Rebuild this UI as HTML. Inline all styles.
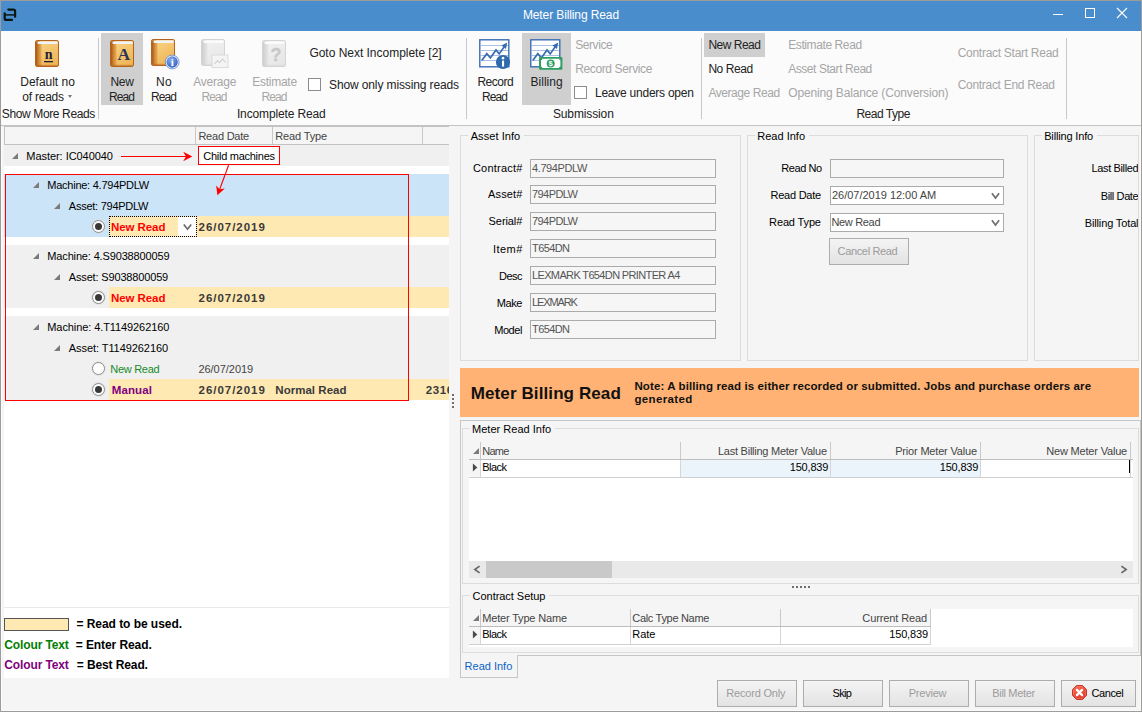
<!DOCTYPE html>
<html lang="en">
<head>
<meta charset="utf-8">
<title>Meter Billing Read</title>
<style>
html,body{margin:0;padding:0}
body{width:1142px;height:712px;position:relative;overflow:hidden;background:#f5f5f5;font-family:"Liberation Sans",sans-serif;font-size:11px;color:#1a1a1a}
.a{position:absolute;white-space:pre}
.bx{position:absolute;box-sizing:border-box}
.hl{background:#cfcfcf}
.sep{width:1px;background:#c8c8c8;top:38px;height:81px}
.chk{width:13px;height:13px;border:1px solid #8c8c8c;background:#fff}
.tri{width:0;height:0;border-left:6px solid transparent;border-bottom:6px solid #7a7a7a}
.radio{width:13px;height:13px;border:1px solid #8d8d8d;border-radius:50%;background:#fff;box-shadow:0 0 0 1px rgba(220,220,220,.6)}
.dot{left:2px;top:2px;width:7px;height:7px;border-radius:50%;background:#383838}
.gb{border:1px solid #dcdcdc}
.cap{background:#f5f5f5;height:12px}
.inp{border:1px solid #ababab;background:#f6f6f6;height:19px}
.inp.w{background:#fff}
.btn{border:1px solid #adadad;background:linear-gradient(#f4f4f4,#e3e3e3);height:27px}
.vl{width:1px;background:#c9c9c9}
.hl1{height:1px;background:#c4c4c4}
</style>
</head>
<body>
<div class="bx" style="left:0;top:0;width:1142px;height:712px;border:1px solid #9d9c9a"></div>
<div class="bx" style="left:1px;top:31px;width:1140px;height:680px;border:1px solid #fbfbfb;border-top:0"></div>
<div class="bx" style="left:1px;top:1px;width:1140px;height:30px;background:#4a8dcc"></div>
<svg class="a" style="left:3px;top:8px" width="15" height="15" viewBox="0 0 15 15"><path d="M5.300 1.600H10.600a1.500 1.500 0 0 1 1.500 1.500V8.700M1.700 5.300V10.400a1.500 1.500 0 0 0 1.500 1.500H9" fill="none" stroke="#0b1610" stroke-width="2.200" stroke-linecap="round" stroke-linejoin="round"/><path d="M1.700 6.900H12.100" fill="none" stroke="#0b1610" stroke-width="1.500"/></svg>
<div class="a" style="left:522.9px;top:7px;font-size:12px;line-height:16px;color:#fff;letter-spacing:-0.11px;">Meter Billing Read</div>
<div class="bx" style="left:1053px;top:14px;width:10px;height:1px;background:#fff"></div>
<div class="bx" style="left:1085px;top:8px;width:10px;height:10px;border:1px solid #fff"></div>
<svg class="a" style="left:1116px;top:7px" width="12" height="12" viewBox="0 0 12 12"><path d="M1 1l10 10M11 1L1 11" stroke="#fff" stroke-width="1.1" fill="none"/></svg>
<div class="bx" style="left:1px;top:31px;width:1140px;height:94px;background:#fbfbfb"></div>
<div class="bx" style="left:1px;top:125px;width:1140px;height:1px;background:#c3c3c3"></div>
<div class="bx sep" style="left:98px"></div>
<div class="bx sep" style="left:466px"></div>
<div class="bx sep" style="left:701px"></div>
<div class="bx sep" style="left:1066px"></div>
<div class="bx hl" style="left:101px;top:33px;width:42px;height:72px"></div>
<div class="bx hl" style="left:522px;top:33px;width:49px;height:72px"></div>
<div class="bx hl" style="left:704px;top:33px;width:61px;height:24px"></div>
<svg class="a" style="left:35px;top:40px" width="24" height="27" viewBox="0 0 24 27"><defs><linearGradient id="b1c" x1="0.2" y1="0" x2="0.8" y2="1"><stop offset="0" stop-color="#f9d584"/><stop offset="1" stop-color="#eeb254"/></linearGradient><linearGradient id="b1s" x1="0" x2="1" y1="0" y2="0"><stop offset="0" stop-color="#a95b1b"/><stop offset="1" stop-color="#e8a548"/></linearGradient></defs><rect x="0.5" y="0.5" width="23" height="26" rx="1.6" ry="1.6" fill="url(#b1c)" stroke="#b4621e"/><path d="M1 2.5a1.5 1.5 0 0 1 1.5-1.5H5.5V26H2.5A1.5 1.5 0 0 1 1 24.5z" fill="url(#b1s)"/><rect x="2.6" y="1.4" width="20" height="2.6" rx=".8" fill="#eef3fa"/><rect x="5.4" y="4" width="0.9" height="22" fill="#b4621e" opacity=".45"/><rect x="1" y="24.8" width="22" height="1.2" fill="#b4621e" opacity=".5"/><text x="13.6" y="19.4" text-anchor="middle" font-family="Liberation Serif, serif" font-weight="bold" font-size="14" fill="#1d2236">n</text><rect x="9" y="21" width="9" height="1.3" fill="#1d2236"/></svg>
<svg class="a" style="left:110px;top:40px" width="24" height="27" viewBox="0 0 24 27"><defs><linearGradient id="b2c" x1="0.2" y1="0" x2="0.8" y2="1"><stop offset="0" stop-color="#f9d584"/><stop offset="1" stop-color="#eeb254"/></linearGradient><linearGradient id="b2s" x1="0" x2="1" y1="0" y2="0"><stop offset="0" stop-color="#a95b1b"/><stop offset="1" stop-color="#e8a548"/></linearGradient></defs><rect x="0.5" y="0.5" width="23" height="26" rx="1.6" ry="1.6" fill="url(#b2c)" stroke="#b4621e"/><path d="M1 2.5a1.5 1.5 0 0 1 1.5-1.5H5.5V26H2.5A1.5 1.5 0 0 1 1 24.5z" fill="url(#b2s)"/><rect x="2.6" y="1.4" width="20" height="2.6" rx=".8" fill="#eef3fa"/><rect x="5.4" y="4" width="0.9" height="22" fill="#b4621e" opacity=".45"/><rect x="1" y="24.8" width="22" height="1.2" fill="#b4621e" opacity=".5"/><text x="13.7" y="20.1" text-anchor="middle" font-family="Liberation Serif, serif" font-weight="bold" font-size="17.5" fill="#2a3558">A</text></svg>
<svg class="a" style="left:151px;top:39px" width="24" height="27" viewBox="0 0 24 27"><defs><linearGradient id="b3c" x1="0.2" y1="0" x2="0.8" y2="1"><stop offset="0" stop-color="#f9d584"/><stop offset="1" stop-color="#eeb254"/></linearGradient><linearGradient id="b3s" x1="0" x2="1" y1="0" y2="0"><stop offset="0" stop-color="#a95b1b"/><stop offset="1" stop-color="#e8a548"/></linearGradient></defs><rect x="0.5" y="0.5" width="23" height="26" rx="1.6" ry="1.6" fill="url(#b3c)" stroke="#b4621e"/><path d="M1 2.5a1.5 1.5 0 0 1 1.5-1.5H5.5V26H2.5A1.5 1.5 0 0 1 1 24.5z" fill="url(#b3s)"/><rect x="2.6" y="1.4" width="20" height="2.6" rx=".8" fill="#eef3fa"/><rect x="5.4" y="4" width="0.9" height="22" fill="#b4621e" opacity=".45"/><rect x="1" y="24.8" width="22" height="1.2" fill="#b4621e" opacity=".5"/></svg>
<svg class="a" style="left:164px;top:54px" width="16" height="16" viewBox="0 0 16 16"><defs><radialGradient id="ib" cx="0.4" cy="0.3" r="0.8"><stop offset="0" stop-color="#86abec"/><stop offset="1" stop-color="#2a5bbf"/></radialGradient></defs><circle cx="8.2" cy="8" r="6.9" fill="#f4f7fd" stroke="#5c7fc4" stroke-width=".8"/><circle cx="8.2" cy="8" r="5.7" fill="url(#ib)"/><text x="8.2" y="11.800" text-anchor="middle" font-family="Liberation Serif, serif" font-weight="bold" font-size="11" fill="#fff">i</text></svg>
<svg class="a" style="left:201px;top:39px" width="24" height="27" viewBox="0 0 24 27"><defs><linearGradient id="b4c" x1="0.2" y1="0" x2="0.8" y2="1"><stop offset="0" stop-color="#f1f1f1"/><stop offset="1" stop-color="#e6e6e6"/></linearGradient><linearGradient id="b4s" x1="0" x2="1" y1="0" y2="0"><stop offset="0" stop-color="#cecece"/><stop offset="1" stop-color="#e2e2e2"/></linearGradient></defs><rect x="0.5" y="0.5" width="23" height="26" rx="1.6" ry="1.6" fill="url(#b4c)" stroke="#d4d4d4"/><path d="M1 2.5a1.5 1.5 0 0 1 1.5-1.5H5.5V26H2.5A1.5 1.5 0 0 1 1 24.5z" fill="url(#b4s)"/><rect x="2.6" y="1.4" width="20" height="2.6" rx=".8" fill="#fbfbfb"/><rect x="5.4" y="4" width="0.9" height="22" fill="#d4d4d4" opacity=".45"/><rect x="1" y="24.8" width="22" height="1.2" fill="#d4d4d4" opacity=".5"/></svg>
<svg class="a" style="left:211px;top:54px" width="18" height="15" viewBox="0 0 18 15"><rect x="1" y="1" width="16" height="12.6" fill="#f4f4f4" stroke="#dadada"/><path d="M3.5 10l3-3.4 2.2 2 2.8-3.6 3 3.4" fill="none" stroke="#cfcfcf" stroke-width="1.1"/></svg>
<svg class="a" style="left:262px;top:40px" width="24" height="27" viewBox="0 0 24 27"><defs><linearGradient id="b5c" x1="0.2" y1="0" x2="0.8" y2="1"><stop offset="0" stop-color="#f1f1f1"/><stop offset="1" stop-color="#e6e6e6"/></linearGradient><linearGradient id="b5s" x1="0" x2="1" y1="0" y2="0"><stop offset="0" stop-color="#cecece"/><stop offset="1" stop-color="#e2e2e2"/></linearGradient></defs><rect x="0.5" y="0.5" width="23" height="26" rx="1.6" ry="1.6" fill="url(#b5c)" stroke="#d4d4d4"/><path d="M1 2.5a1.5 1.5 0 0 1 1.5-1.5H5.5V26H2.5A1.5 1.5 0 0 1 1 24.5z" fill="url(#b5s)"/><rect x="2.6" y="1.4" width="20" height="2.6" rx=".8" fill="#fbfbfb"/><rect x="5.4" y="4" width="0.9" height="22" fill="#d4d4d4" opacity=".45"/><rect x="1" y="24.8" width="22" height="1.2" fill="#d4d4d4" opacity=".5"/><text x="14" y="20.5" text-anchor="middle" font-family="Liberation Sans, sans-serif" font-weight="bold" font-size="18" fill="#c8c8c8" stroke="#c8c8c8" stroke-width=".3">?</text></svg>
<div class="a" style="left:20.3px;top:75px;font-size:12px;line-height:15px;color:#222;letter-spacing:-0.02px;">Default no</div>
<div class="a" style="left:22.3px;top:90px;font-size:12px;line-height:15px;color:#222;letter-spacing:-0.23px;">of reads</div>
<div class="bx" style="left:68px;top:95px;width:0;height:0;border-left:2.5px solid transparent;border-right:2.5px solid transparent;border-top:3px solid #777"></div>
<div class="a" style="left:1.8px;top:107px;font-size:12px;line-height:15px;color:#222;letter-spacing:-0.37px;">Show More Reads</div>
<div class="a" style="left:110.4px;top:75px;font-size:12px;line-height:15px;color:#222;letter-spacing:-0.24px;">New</div>
<div class="a" style="left:109.0px;top:90px;font-size:12px;line-height:15px;color:#222;letter-spacing:-0.92px;">Read</div>
<div class="a" style="left:156.1px;top:75px;font-size:12px;line-height:15px;color:#222;letter-spacing:0.13px;">No</div>
<div class="a" style="left:151.0px;top:90px;font-size:12px;line-height:15px;color:#222;letter-spacing:-0.92px;">Read</div>
<div class="a" style="left:193.3px;top:75px;font-size:12px;line-height:15px;color:#a6a6a6;letter-spacing:-0.24px;">Average</div>
<div class="a" style="left:201.5px;top:90px;font-size:12px;line-height:15px;color:#a6a6a6;letter-spacing:-0.92px;">Read</div>
<div class="a" style="left:252.2px;top:75px;font-size:12px;line-height:15px;color:#a6a6a6;letter-spacing:-0.26px;">Estimate</div>
<div class="a" style="left:261.5px;top:90px;font-size:12px;line-height:15px;color:#a6a6a6;letter-spacing:-0.92px;">Read</div>
<div class="a" style="left:309.4px;top:46px;font-size:12px;line-height:15px;color:#222;letter-spacing:-0.02px;">Goto Next Incomplete [2]</div>
<div class="bx chk" style="left:308px;top:78px"></div>
<div class="a" style="left:329.0px;top:78px;font-size:12px;line-height:15px;color:#222;letter-spacing:-0.12px;">Show only missing reads</div>
<div class="a" style="left:236.9px;top:107px;font-size:12px;line-height:15px;color:#222;letter-spacing:-0.13px;">Incomplete Read</div>
<svg class="a" style="left:478.6px;top:38.6px" width="31" height="29" viewBox="0 0 31 29"><rect x="0.8" y="0.8" width="29" height="27" fill="#fff" stroke="#3a6cb2" stroke-width="1.4"/><path d="M2 6.5H29" stroke="#a9c1e4" stroke-width="1"/><path d="M2 11.5H29" stroke="#a9c1e4" stroke-width="1"/><path d="M2 16.5H29" stroke="#a9c1e4" stroke-width="1"/><path d="M2 21.5H29" stroke="#a9c1e4" stroke-width="1"/><path d="M2.8 21.5l5-6.8 3.6 4.2 5.6-8 3.2 4 5.4-7.6" fill="none" stroke="#3a6cb2" stroke-width="1.7" stroke-linejoin="miter"/><path d="M28.2 3.6l-1.2 6.4-4.6-3.6z" fill="#3a6cb2"/></svg>
<svg class="a" style="left:495px;top:54px" width="16" height="16" viewBox="0 0 16 16"><circle cx="8" cy="8" r="7.1" fill="#2f69ae"/><rect x="7" y="6.6" width="2.1" height="6" fill="#fff"/><circle cx="8" cy="4.2" r="1.35" fill="#fff"/></svg>
<svg class="a" style="left:529.6px;top:38.6px" width="31" height="29" viewBox="0 0 31 29"><rect x="0.8" y="0.8" width="29" height="27" fill="#fff" stroke="#3a6cb2" stroke-width="1.4"/><path d="M2 6.5H29" stroke="#a9c1e4" stroke-width="1"/><path d="M2 11.5H29" stroke="#a9c1e4" stroke-width="1"/><path d="M2 16.5H29" stroke="#a9c1e4" stroke-width="1"/><path d="M2 21.5H29" stroke="#a9c1e4" stroke-width="1"/><path d="M2.8 21.5l5-6.8 3.6 4.2 5.6-8 3.2 4 5.4-7.6" fill="none" stroke="#3a6cb2" stroke-width="1.7" stroke-linejoin="miter"/><path d="M28.2 3.6l-1.2 6.4-4.6-3.6z" fill="#3a6cb2"/></svg>
<svg class="a" style="left:539px;top:57px" width="24" height="13" viewBox="0 0 24 13"><rect x="0" y="0" width="23.4" height="12.8" rx="1" fill="#2f9e63"/><path d="M2 3.2a1.6 1.6 0 0 0 1.4-1.4H20a1.6 1.6 0 0 0 1.4 1.4v6.4A1.6 1.6 0 0 0 20 11H3.4A1.6 1.6 0 0 0 2 9.6z" fill="#fff"/><circle cx="11.7" cy="6.4" r="4" fill="#2f9e63"/><text x="11.7" y="9.2" text-anchor="middle" font-family="Liberation Sans, sans-serif" font-weight="bold" font-size="7.5" fill="#fff">$</text></svg>
<div class="a" style="left:477.4px;top:75px;font-size:12px;line-height:15px;color:#222;letter-spacing:-0.5px;">Record</div>
<div class="a" style="left:482.0px;top:90px;font-size:12px;line-height:15px;color:#222;letter-spacing:-0.92px;">Read</div>
<div class="a" style="left:530.6px;top:75px;font-size:12px;line-height:15px;color:#222;">Billing</div>
<div class="a" style="left:575.2px;top:38px;font-size:12px;line-height:15px;color:#a6a6a6;letter-spacing:-0.43px;">Service</div>
<div class="a" style="left:575.2px;top:62px;font-size:12px;line-height:15px;color:#a6a6a6;letter-spacing:-0.37px;">Record Service</div>
<div class="bx chk" style="left:574px;top:86px"></div>
<div class="a" style="left:595.0px;top:86px;font-size:12px;line-height:15px;color:#222;letter-spacing:-0.24px;">Leave unders open</div>
<div class="a" style="left:552.9px;top:107px;font-size:12px;line-height:15px;color:#222;letter-spacing:-0.12px;">Submission</div>
<div class="a" style="left:708.4px;top:38px;font-size:12px;line-height:15px;color:#222;letter-spacing:-0.5px;">New Read</div>
<div class="a" style="left:708.4px;top:62px;font-size:12px;line-height:15px;color:#222;letter-spacing:-0.44px;">No Read</div>
<div class="a" style="left:708.4px;top:86px;font-size:12px;line-height:15px;color:#a6a6a6;letter-spacing:-0.44px;">Average Read</div>
<div class="a" style="left:788.2px;top:38px;font-size:12px;line-height:15px;color:#a6a6a6;letter-spacing:-0.4px;">Estimate Read</div>
<div class="a" style="left:788.2px;top:62px;font-size:12px;line-height:15px;color:#a6a6a6;letter-spacing:-0.44px;">Asset Start Read</div>
<div class="a" style="left:788.2px;top:86px;font-size:12px;line-height:15px;color:#a6a6a6;letter-spacing:-0.14px;">Opening Balance (Conversion)</div>
<div class="a" style="left:957.7px;top:46px;font-size:12px;line-height:15px;color:#a6a6a6;letter-spacing:-0.28px;">Contract Start Read</div>
<div class="a" style="left:957.7px;top:78px;font-size:12px;line-height:15px;color:#a6a6a6;letter-spacing:-0.3px;">Contract End Read</div>
<div class="a" style="left:856.4px;top:107px;font-size:12px;line-height:15px;color:#222;letter-spacing:-0.48px;">Read Type</div>
<div class="bx" style="left:4px;top:126px;width:445px;height:552px;background:#fff"></div>
<div class="bx" style="left:4px;top:126px;width:445px;height:19px;background:#f5f5f5;border:1px solid #c2c2c2;border-right:0"></div>
<div class="bx vl" style="left:195px;top:127px;height:17px"></div>
<div class="bx vl" style="left:272px;top:127px;height:17px"></div>
<div class="bx vl" style="left:422px;top:127px;height:17px"></div>
<div class="a" style="left:198.4px;top:129px;font-size:11px;line-height:14px;color:#444;letter-spacing:-0.22px;">Read Date</div>
<div class="a" style="left:275.3px;top:129px;font-size:11px;line-height:14px;color:#444;letter-spacing:-0.15px;">Read Type</div>
<div class="bx" style="left:4px;top:145px;width:445px;height:21px;background:#f0f0f0"></div>
<div class="bx" style="left:4px;top:174px;width:445px;height:63px;background:#cce4f7"></div>
<div class="bx" style="left:109px;top:216px;width:340px;height:21px;background:#ffe9b3"></div>
<div class="bx" style="left:4px;top:245px;width:445px;height:63px;background:#f0f0f0"></div>
<div class="bx" style="left:109px;top:287px;width:340px;height:21px;background:#ffe9b3"></div>
<div class="bx" style="left:4px;top:316px;width:445px;height:84px;background:#f0f0f0"></div>
<div class="bx" style="left:109px;top:379px;width:340px;height:21px;background:#ffe9b3"></div>
<div class="bx tri" style="left:12px;top:153px"></div>
<div class="a" style="left:26.3px;top:149px;font-size:11px;line-height:14px;color:#000;letter-spacing:-0.05px;">Master: IC040040</div>
<div class="bx tri" style="left:33px;top:182px"></div>
<div class="a" style="left:47.3px;top:178px;font-size:11px;line-height:14px;color:#000;letter-spacing:-0.25px;">Machine: 4.794PDLW</div>
<div class="bx tri" style="left:54px;top:203px"></div>
<div class="a" style="left:68.8px;top:199px;font-size:11px;line-height:14px;color:#000;letter-spacing:-0.25px;">Asset: 794PDLW</div>
<div class="bx tri" style="left:33px;top:253px"></div>
<div class="a" style="left:47.3px;top:249px;font-size:11px;line-height:14px;color:#000;letter-spacing:-0.15px;">Machine: 4.S9038800059</div>
<div class="bx tri" style="left:54px;top:274px"></div>
<div class="a" style="left:68.8px;top:270px;font-size:11px;line-height:14px;color:#000;letter-spacing:-0.16px;">Asset: S9038800059</div>
<div class="bx tri" style="left:33px;top:324px"></div>
<div class="a" style="left:47.3px;top:320px;font-size:11px;line-height:14px;color:#000;letter-spacing:-0.09px;">Machine: 4.T1149262160</div>
<div class="bx tri" style="left:54px;top:345px"></div>
<div class="a" style="left:68.8px;top:341px;font-size:11px;line-height:14px;color:#000;letter-spacing:-0.07px;">Asset: T1149262160</div>
<div class="bx radio" style="left:92px;top:220px"><div class="bx dot"></div></div>
<div class="bx" style="left:109px;top:216px;width:88px;height:21px;border:1px dotted #000"></div>
<div class="bx" style="left:178px;top:217px;width:18px;height:19px;background:#fff"></div>
<svg class="a" style="left:183px;top:223px" width="9" height="8" viewBox="0 0 9 8"><path d="M0.8 1.4L4.5 6.2 8.2 1.4" fill="none" stroke="#6a6a6a" stroke-width="1.7"/></svg>
<div class="a" style="left:111.0px;top:220px;font-size:11.5px;line-height:14.5px;color:#f00;font-weight:bold;letter-spacing:-0.08px;">New Read</div>
<div class="a" style="left:198.6px;top:220px;font-size:11.5px;line-height:14.5px;color:#3a3a3a;font-weight:bold;letter-spacing:0.96px;">26/07/2019</div>
<div class="bx radio" style="left:92px;top:291px"><div class="bx dot"></div></div>
<div class="a" style="left:111.0px;top:291px;font-size:11.5px;line-height:14.5px;color:#f00;font-weight:bold;letter-spacing:-0.08px;">New Read</div>
<div class="a" style="left:198.6px;top:291px;font-size:11.5px;line-height:14.5px;color:#3a3a3a;font-weight:bold;letter-spacing:0.96px;">26/07/2019</div>
<div class="bx radio" style="left:92px;top:362px"></div>
<div class="a" style="left:110.3px;top:362px;font-size:11px;line-height:14px;color:#178a2a;letter-spacing:-0.29px;">New Read</div>
<div class="a" style="left:198.4px;top:362px;font-size:11px;line-height:14px;color:#444;letter-spacing:-0.03px;">26/07/2019</div>
<div class="bx radio" style="left:92px;top:383px"><div class="bx dot"></div></div>
<div class="a" style="left:111.7px;top:383px;font-size:11.5px;line-height:14.5px;color:#800080;font-weight:bold;letter-spacing:0.11px;">Manual</div>
<div class="a" style="left:198.6px;top:383px;font-size:11.5px;line-height:14.5px;color:#3a3a3a;font-weight:bold;letter-spacing:0.96px;">26/07/2019</div>
<div class="a" style="left:275.3px;top:383px;font-size:11.5px;line-height:14.5px;color:#3a3a3a;font-weight:bold;letter-spacing:0.03px;">Normal Read</div>
<div class="bx" style="left:422px;top:380px;width:27px;height:20px;overflow:hidden">
<div class="a" style="left:3.7px;top:3px;font-size:11.5px;line-height:14.5px;color:#3a3a3a;font-weight:bold;letter-spacing:0.6px;">231600</div>
</div>
<div class="bx" style="left:5px;top:174px;width:404px;height:227px;border:1px solid #f00"></div>
<div class="bx" style="left:198px;top:146px;width:82px;height:19px;border:1px solid #f00;background:#fff"></div>
<div class="a" style="left:203.3px;top:149px;font-size:11px;line-height:14px;color:#000;letter-spacing:-0.27px;">Child machines</div>
<svg class="a" style="left:110px;top:140px" width="130" height="60" viewBox="110 140 130 60"><path d="M121 156.5H187" stroke="#f00" stroke-width="1.1" fill="none"/><path d="M192.3 156.5L183.2 151.8 186 156.5 183.2 161.2z" fill="#f00"/><path d="M228.6 165.2L219.6 189.5" stroke="#f00" stroke-width="1.1" fill="none"/><path d="M217.4 195.3L216.2 185.6 219.6 189.2 224.8 188.5z" fill="#f00"/></svg>
<div class="bx" style="left:4px;top:607px;width:445px;height:1px;background:#e9e9e9"></div>
<div class="bx" style="left:4px;top:618px;width:65px;height:13px;background:#ffe9b3;border:1px solid #555"></div>
<div class="a" style="left:76.5px;top:617px;font-size:12px;line-height:15px;color:#000;font-weight:bold;letter-spacing:-0.05px;">= Read to be used.</div>
<div class="a" style="left:4.2px;top:638px;font-size:12px;line-height:15px;color:#008000;font-weight:bold;letter-spacing:-0.11px;">Colour Text</div>
<div class="a" style="left:75.8px;top:638px;font-size:12px;line-height:15px;color:#000;font-weight:bold;letter-spacing:-0.09px;">= Enter Read.</div>
<div class="a" style="left:4.2px;top:658px;font-size:12px;line-height:15px;color:#800080;font-weight:bold;letter-spacing:-0.11px;">Colour Text</div>
<div class="a" style="left:76.8px;top:658px;font-size:12px;line-height:15px;color:#000;font-weight:bold;letter-spacing:-0.11px;">= Best Read.</div>
<div class="bx" style="left:452px;top:394px;width:2px;height:2px;background:#6e6e6e"></div>
<div class="bx" style="left:452px;top:398px;width:2px;height:2px;background:#6e6e6e"></div>
<div class="bx" style="left:452px;top:402px;width:2px;height:2px;background:#6e6e6e"></div>
<div class="bx" style="left:452px;top:406px;width:2px;height:2px;background:#6e6e6e"></div>
<div class="bx gb" style="left:460px;top:135px;width:281px;height:226px;"></div>
<div class="bx cap" style="left:468px;top:130px;width:56px"></div>
<div class="a" style="left:470.7px;top:129px;font-size:11px;line-height:14px;color:#000;letter-spacing:0.07px;">Asset Info</div>
<div class="bx gb" style="left:747px;top:135px;width:281px;height:226px;"></div>
<div class="bx cap" style="left:755px;top:130px;width:54px"></div>
<div class="a" style="left:757.3px;top:129px;font-size:11px;line-height:14px;color:#000;">Read Info</div>
<div class="bx gb" style="left:1034px;top:135px;width:105px;height:226px;"></div>
<div class="bx cap" style="left:1042px;top:130px;width:55px"></div>
<div class="a" style="left:1044.2px;top:129px;font-size:11px;line-height:14px;color:#000;letter-spacing:-0.16px;">Billing Info</div>
<div class="bx inp" style="left:530px;top:159px;width:186px"></div>
<div class="a" style="left:472.9px;top:161px;font-size:11px;line-height:14px;color:#000;letter-spacing:0.23px;">Contract#</div>
<div class="a" style="left:532.0px;top:161px;font-size:11px;line-height:14px;color:#555;letter-spacing:-0.39px;">4.794PDLW</div>
<div class="bx inp" style="left:530px;top:185px;width:186px"></div>
<div class="a" style="left:488.1px;top:187px;font-size:11px;line-height:14px;color:#000;letter-spacing:0.13px;">Asset#</div>
<div class="a" style="left:532.0px;top:187px;font-size:11px;line-height:14px;color:#555;letter-spacing:-0.56px;">794PDLW</div>
<div class="bx inp" style="left:530px;top:212px;width:186px"></div>
<div class="a" style="left:488.6px;top:214px;font-size:11px;line-height:14px;color:#000;letter-spacing:-0.08px;">Serial#</div>
<div class="a" style="left:532.0px;top:214px;font-size:11px;line-height:14px;color:#555;letter-spacing:-0.56px;">794PDLW</div>
<div class="bx inp" style="left:530px;top:239px;width:186px"></div>
<div class="a" style="left:493.0px;top:242px;font-size:11px;line-height:14px;color:#000;letter-spacing:0.46px;">Item#</div>
<div class="a" style="left:532.0px;top:241px;font-size:11px;line-height:14px;color:#555;letter-spacing:-0.58px;">T654DN</div>
<div class="bx inp" style="left:530px;top:266px;width:186px"></div>
<div class="a" style="left:499.1px;top:269px;font-size:11px;line-height:14px;color:#000;letter-spacing:-0.59px;">Desc</div>
<div class="a" style="left:532.0px;top:268px;font-size:11px;line-height:14px;color:#555;letter-spacing:-0.64px;">LEXMARK T654DN PRINTER A4</div>
<div class="bx inp" style="left:530px;top:293px;width:186px"></div>
<div class="a" style="left:496.7px;top:296px;font-size:11px;line-height:14px;color:#000;letter-spacing:-0.4px;">Make</div>
<div class="a" style="left:532.0px;top:295px;font-size:11px;line-height:14px;color:#555;letter-spacing:-1.13px;">LEXMARK</div>
<div class="bx inp" style="left:530px;top:320px;width:186px"></div>
<div class="a" style="left:494.2px;top:323px;font-size:11px;line-height:14px;color:#000;letter-spacing:-0.45px;">Model</div>
<div class="a" style="left:532.0px;top:322px;font-size:11px;line-height:14px;color:#555;letter-spacing:-0.58px;">T654DN</div>
<div class="bx inp" style="left:830px;top:159px;width:174px"></div>
<div class="bx inp w" style="left:830px;top:186px;width:174px"></div>
<div class="bx inp w" style="left:830px;top:213px;width:174px"></div>
<svg class="a" style="left:991px;top:192px" width="9" height="8" viewBox="0 0 9 8"><path d="M0.9 1.3L4.5 6 8.1 1.3" fill="none" stroke="#707070" stroke-width="1.7"/></svg>
<svg class="a" style="left:991px;top:219px" width="9" height="8" viewBox="0 0 9 8"><path d="M0.9 1.3L4.5 6 8.1 1.3" fill="none" stroke="#707070" stroke-width="1.7"/></svg>
<div class="a" style="left:781.3px;top:161px;font-size:11px;line-height:14px;color:#000;letter-spacing:-0.42px;">Read No</div>
<div class="a" style="left:770.5px;top:188px;font-size:11px;line-height:14px;color:#000;letter-spacing:-0.24px;">Read Date</div>
<div class="a" style="left:769.1px;top:215px;font-size:11px;line-height:14px;color:#000;letter-spacing:-0.14px;">Read Type</div>
<div class="a" style="left:832.0px;top:188px;font-size:11px;line-height:14px;color:#444;letter-spacing:-0.02px;">26/07/2019 12:00 AM</div>
<div class="a" style="left:831.4px;top:215px;font-size:11px;line-height:14px;color:#444;letter-spacing:-0.32px;">New Read</div>
<div class="bx btn" style="left:829px;top:238px;width:80px"></div>
<div class="a" style="left:837.6px;top:244px;font-size:11px;line-height:14px;color:#9a9a9a;letter-spacing:-0.35px;">Cancel Read</div>
<div class="bx" style="left:1040px;top:150px;width:98px;height:90px;overflow:hidden">
<div class="a" style="left:51.6px;top:11px;font-size:11px;line-height:14px;color:#000;letter-spacing:-0.38px;">Last Billed</div>
<div class="a" style="left:60.8px;top:39px;font-size:11px;line-height:14px;color:#000;letter-spacing:-0.39px;">Bill Date</div>
<div class="a" style="left:44.7px;top:66px;font-size:11px;line-height:14px;color:#000;letter-spacing:-0.13px;">Billing Total</div>
</div>
<div class="bx" style="left:460px;top:368px;width:679px;height:49px;background:#ffb273"></div>
<div class="a" style="left:470.8px;top:383px;font-size:17px;line-height:21px;color:#111;font-weight:bold;letter-spacing:0.1px;">Meter Billing Read</div>
<div class="a" style="left:634.4px;top:379px;font-size:11.5px;line-height:14.5px;color:#111;font-weight:bold;letter-spacing:0.11px;">Note: A billing read is either recorded or submitted. Jobs and purchase orders are</div>
<div class="a" style="left:634.4px;top:392px;font-size:11.5px;line-height:14.5px;color:#111;font-weight:bold;letter-spacing:0.35px;">generated</div>
<div class="bx" style="left:460px;top:420px;width:681px;height:236px;border:1px solid #c6c6c6;border-bottom:0"></div>
<div class="bx" style="left:517px;top:655px;width:624px;height:1px;background:#c6c6c6"></div>
<div class="bx" style="left:460px;top:655px;width:58px;height:23px;border:1px solid #c6c6c6;border-top:0"></div>
<div class="a" style="left:464.6px;top:659px;font-size:11px;line-height:14px;color:#0b63c5;">Read Info</div>
<div class="bx gb" style="left:462px;top:428px;width:677px;height:156px;"></div>
<div class="bx cap" style="left:470px;top:423px;width:85px"></div>
<div class="a" style="left:472.0px;top:422px;font-size:11px;line-height:14px;color:#000;letter-spacing:0.02px;">Meter Read Info</div>
<div class="bx" style="left:469px;top:460px;width:664px;height:101px;background:#fff"></div>
<div class="bx" style="left:469px;top:460px;width:11px;height:17px;background:#f5f5f5"></div>
<div class="bx" style="left:681px;top:460px;width:299px;height:17px;background:#ebf4fa"></div>
<div class="bx vl" style="left:480px;top:442px;height:17px"></div>
<div class="bx vl" style="left:480px;top:460px;height:17px;background:#d6d6d6"></div>
<div class="bx vl" style="left:680px;top:442px;height:17px"></div>
<div class="bx vl" style="left:680px;top:460px;height:17px;background:#d6d6d6"></div>
<div class="bx vl" style="left:830px;top:442px;height:17px"></div>
<div class="bx vl" style="left:830px;top:460px;height:17px;background:#d6d6d6"></div>
<div class="bx vl" style="left:980px;top:442px;height:17px"></div>
<div class="bx vl" style="left:980px;top:460px;height:17px;background:#d6d6d6"></div>
<div class="bx vl" style="left:1130px;top:442px;height:17px"></div>
<div class="bx vl" style="left:1130px;top:460px;height:17px;background:#d6d6d6"></div>
<div class="bx hl1" style="left:469px;top:459px;width:664px;background:#bdbdbd"></div>
<div class="bx hl1" style="left:469px;top:477px;width:664px;background:#d0d0d0"></div>
<div class="bx tri" style="left:473px;top:448px"></div>
<svg class="a" style="left:472px;top:463px" width="6" height="9" viewBox="0 0 6 9"><path d="M0.900 0.600L5.300 4.500 0.900 8.400z" fill="#4a4a4a"/></svg>
<div class="a" style="left:482.2px;top:444px;font-size:11px;line-height:14px;color:#444;letter-spacing:-0.71px;">Name</div>
<div class="a" style="left:718.0px;top:444px;font-size:11px;line-height:14px;color:#444;letter-spacing:-0.25px;">Last Billing Meter Value</div>
<div class="a" style="left:895.2px;top:444px;font-size:11px;line-height:14px;color:#444;letter-spacing:-0.18px;">Prior Meter Value</div>
<div class="a" style="left:1046.3px;top:444px;font-size:11px;line-height:14px;color:#444;letter-spacing:-0.19px;">New Meter Value</div>
<div class="a" style="left:482.2px;top:460px;font-size:11px;line-height:14px;color:#000;letter-spacing:-0.54px;">Black</div>
<div class="a" style="left:789.7px;top:460px;font-size:11px;line-height:14px;color:#000;letter-spacing:-0.17px;">150,839</div>
<div class="a" style="left:939.7px;top:460px;font-size:11px;line-height:14px;color:#000;letter-spacing:-0.17px;">150,839</div>
<div class="bx" style="left:1129px;top:460px;width:1px;height:13px;background:#000"></div>
<div class="bx" style="left:469px;top:561px;width:664px;height:17px;background:#e9e9e9"></div>
<div class="bx" style="left:486px;top:561px;width:126px;height:17px;background:#c9c9c9"></div>
<svg class="a" style="left:473px;top:565px" width="8" height="9" viewBox="0 0 8 9"><path d="M6.6 1.200L1.800 4.500 6.600 7.800" fill="none" stroke="#666" stroke-width="1.600"/></svg>
<svg class="a" style="left:1120px;top:565px" width="8" height="9" viewBox="0 0 8 9"><path d="M1.400 1.200L6.200 4.500 1.400 7.800" fill="none" stroke="#666" stroke-width="1.600"/></svg>
<div class="bx" style="left:792px;top:586px;width:2px;height:2px;background:#6e6e6e"></div>
<div class="bx" style="left:796px;top:586px;width:2px;height:2px;background:#6e6e6e"></div>
<div class="bx" style="left:800px;top:586px;width:2px;height:2px;background:#6e6e6e"></div>
<div class="bx" style="left:804px;top:586px;width:2px;height:2px;background:#6e6e6e"></div>
<div class="bx" style="left:808px;top:586px;width:2px;height:2px;background:#6e6e6e"></div>
<div class="bx gb" style="left:462px;top:595px;width:677px;height:58px;"></div>
<div class="bx cap" style="left:470px;top:590px;width:79px"></div>
<div class="a" style="left:472.6px;top:589px;font-size:11px;line-height:14px;color:#000;letter-spacing:-0.04px;">Contract Setup</div>
<div class="bx" style="left:469px;top:609px;width:664px;height:38px;background:#fff"></div>
<div class="bx" style="left:469px;top:609px;width:462px;height:17px;background:#f5f5f5"></div>
<div class="bx" style="left:469px;top:627px;width:11px;height:17px;background:#f5f5f5"></div>
<div class="bx vl" style="left:480px;top:609px;height:17px"></div>
<div class="bx vl" style="left:480px;top:627px;height:17px;background:#d6d6d6"></div>
<div class="bx vl" style="left:630px;top:609px;height:17px"></div>
<div class="bx vl" style="left:630px;top:627px;height:17px;background:#d6d6d6"></div>
<div class="bx vl" style="left:780px;top:609px;height:17px"></div>
<div class="bx vl" style="left:780px;top:627px;height:17px;background:#d6d6d6"></div>
<div class="bx vl" style="left:930px;top:609px;height:17px"></div>
<div class="bx vl" style="left:930px;top:627px;height:17px;background:#d6d6d6"></div>
<div class="bx hl1" style="left:469px;top:626px;width:462px;background:#bdbdbd"></div>
<div class="bx hl1" style="left:469px;top:644px;width:462px;background:#d0d0d0"></div>
<div class="bx tri" style="left:473px;top:615px"></div>
<svg class="a" style="left:472px;top:630px" width="6" height="9" viewBox="0 0 6 9"><path d="M0.900 0.600L5.300 4.500 0.900 8.400z" fill="#4a4a4a"/></svg>
<div class="a" style="left:482.2px;top:611px;font-size:11px;line-height:14px;color:#444;letter-spacing:-0.17px;">Meter Type Name</div>
<div class="a" style="left:632.3px;top:611px;font-size:11px;line-height:14px;color:#444;letter-spacing:-0.31px;">Calc Type Name</div>
<div class="a" style="left:862.3px;top:611px;font-size:11px;line-height:14px;color:#444;letter-spacing:-0.1px;">Current Read</div>
<div class="a" style="left:482.2px;top:627px;font-size:11px;line-height:14px;color:#000;letter-spacing:-0.54px;">Black</div>
<div class="a" style="left:632.3px;top:627px;font-size:11px;line-height:14px;color:#000;letter-spacing:-0.06px;">Rate</div>
<div class="a" style="left:889.2px;top:627px;font-size:11px;line-height:14px;color:#000;letter-spacing:-0.14px;">150,839</div>
<div class="bx btn" style="left:717px;top:680px;width:80px"></div>
<div class="bx btn" style="left:803px;top:680px;width:80px"></div>
<div class="bx btn" style="left:889px;top:680px;width:80px"></div>
<div class="bx btn" style="left:975px;top:680px;width:80px"></div>
<div class="bx btn" style="left:1061px;top:680px;width:75px"></div>
<div class="a" style="left:726.3px;top:686px;font-size:11px;line-height:14px;color:#9c9c9c;letter-spacing:-0.19px;">Record Only</div>
<div class="a" style="left:832.6px;top:686px;font-size:11px;line-height:14px;color:#000;letter-spacing:-0.73px;">Skip</div>
<div class="a" style="left:908.7px;top:686px;font-size:11px;line-height:14px;color:#9c9c9c;letter-spacing:-0.22px;">Preview</div>
<div class="a" style="left:992.3px;top:686px;font-size:11px;line-height:14px;color:#9c9c9c;letter-spacing:-0.33px;">Bill Meter</div>
<div class="a" style="left:1091.4px;top:686px;font-size:11px;line-height:14px;color:#000;letter-spacing:-0.39px;">Cancel</div>
<svg class="a" style="left:1071px;top:684px" width="17" height="17" viewBox="0 0 17 17"><defs><radialGradient id="cx" cx="0.4" cy="0.3" r="0.9"><stop offset="0" stop-color="#f8705c"/><stop offset="1" stop-color="#d8200f"/></radialGradient></defs><path d="M5.600 1.500h5.800l4.100 4.100v5.800L11.400 15.500H5.600L1.500 11.400V5.600z" fill="url(#cx)" stroke="#c5281c" stroke-width=".9"/><path d="M6 2.600h5l3.400 3.400v5L11 14.400H6L2.600 11V6z" fill="none" stroke="#ffb0a0" stroke-opacity=".55" stroke-width=".7"/><path d="M5.900 5.900l5.200 5.200M11.100 5.900l-5.200 5.200" stroke="#fff" stroke-width="2.200" stroke-linecap="round"/></svg>
</body>
</html>
